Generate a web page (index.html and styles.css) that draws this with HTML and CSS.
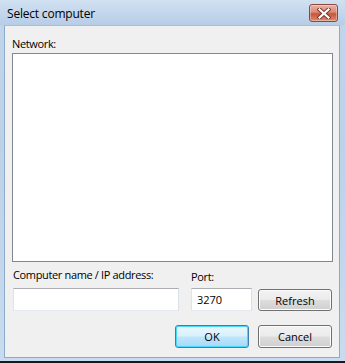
FILE: index.html
```html
<!DOCTYPE html>
<html lang="en">
<head>
<meta charset="UTF-8">
<title>Select computer</title>
<link rel="stylesheet" href="styles.css">
</head>
<body>

<div class="window">
    <div class="titlebar">
        <span class="title">Select computer</span>
        <button class="close-btn" aria-label="Close">
            <svg width="14" height="11" viewBox="0 0 14 11">
                <path d="M2.5 1.5 L11.5 9.5 M11.5 1.5 L2.5 9.5" stroke="#7a3328" stroke-width="4" stroke-linecap="square"/>
                <path d="M2.5 1.5 L11.5 9.5 M11.5 1.5 L2.5 9.5" stroke="#fff" stroke-width="2.2" stroke-linecap="square"/>
            </svg>
        </button>
    </div>
    <div class="client">
        <label class="label">Network:</label>
        <div class="network-list"></div>

        <div class="row">
            <div class="field name-field">
                <label class="label">Computer name / IP address:</label>
                <input type="text" class="textbox name-box">
            </div>
            <div class="field port-field">
                <label class="label">Port:</label>
                <input type="text" class="textbox port-box" value="3270">
            </div>
            <button class="btn refresh-btn">Refresh</button>
        </div>

        <div class="actions">
            <button class="btn default-btn">OK</button>
            <button class="btn">Cancel</button>
        </div>
    </div>
</div>

</body>
</html>
```

FILE: styles.css
```css
body {
    margin: 0;
    padding: 0;
    font-family: "Open Sans", "Noto Sans", sans-serif;
    font-size: 11px;
    color: #000;
}

.window {
    width: 345px;
    height: 363px;
    box-sizing: border-box;
    background: linear-gradient(to bottom, #c2d5ea, #bcd2e8 40%, #c9dbef);
    border-bottom: 2px solid #1a1a1a;
    display: flex;
    flex-direction: column;
}

.titlebar {
    height: 25px;
    display: flex;
    align-items: center;
    justify-content: space-between;
    padding: 0 7px 0 7px;
    background: linear-gradient(to bottom, #d1e1f2, #b7cde6);
}

.title {
    font-size: 12px;
    letter-spacing: -0.2px;
    color: #000;
    margin-top: 1px;
}

.close-btn {
    width: 29px;
    height: 18px;
    margin-top: 1px;
    padding: 0;
    border: 1px solid #87483d;
    border-radius: 3px;
    background: linear-gradient(to bottom, #eab1a3, #d98a77 45%, #c8543b 55%, #dd8b6d);
    box-shadow: inset 0 0 0 1px rgba(255, 255, 255, 0.35);
    display: flex;
    align-items: center;
    justify-content: center;
}

.client {
    flex: 1;
    margin: 0 5px 3px 4px;
    background: #f0f0f0;
    border: 1px solid #8eaacb;
    border-top-color: #a9c0da;
    padding: 10px 6px 0 7px;
    display: flex;
    flex-direction: column;
}

.label {
    display: block;
    line-height: 16px;
    margin-bottom: 1px;
    letter-spacing: -0.35px;
}

.network-list {
    height: 207px;
    background: #fff;
    border: 1px solid #828790;
}

.row {
    display: flex;
    align-items: flex-end;
    margin-top: 5px;
}

.field {
    display: flex;
    flex-direction: column;
}

.name-field {
    margin-left: 1px;
}

.name-field .label {
    margin-bottom: 5px;
}

.port-field {
    margin-left: 12px;
}

.port-field .label {
    margin-bottom: 3px;
}

.textbox {
    height: 23px;
    box-sizing: border-box;
    border: 1px solid #abadb3;
    border-left-color: #e2e3ea;
    border-right-color: #dbdfe6;
    border-bottom-color: #e3e9ef;
    background: #fff;
    font-family: "Open Sans", "Noto Sans", sans-serif;
    font-size: 11px;
    padding: 0 5px;
    margin: 0;
}

.name-box {
    width: 166px;
}

.port-box {
    width: 61px;
}

.btn {
    width: 74px;
    height: 23px;
    box-sizing: border-box;
    border: 1px solid #707070;
    border-radius: 3px;
    background: linear-gradient(to bottom, #f2f2f2, #ebebeb 48%, #dddddd 52%, #cfcfcf);
    box-shadow: inset 0 0 0 1px #fcfcfc;
    font-family: "Open Sans", "Noto Sans", sans-serif;
    font-size: 11px;
    color: #000;
    padding: 0;
}

.refresh-btn {
    margin-left: 6px;
    height: 22px;
}

.actions {
    display: flex;
    justify-content: flex-end;
    gap: 9px;
    margin-top: 14px;
    padding-right: 1px;
}

.default-btn {
    border-color: #3c7fb1;
    box-shadow: inset 0 0 0 1px #48d8fb;
    background: linear-gradient(to bottom, #eaf6fd, #d9f0fc 48%, #bee6fd 52%, #a7d9f5);
}
```
